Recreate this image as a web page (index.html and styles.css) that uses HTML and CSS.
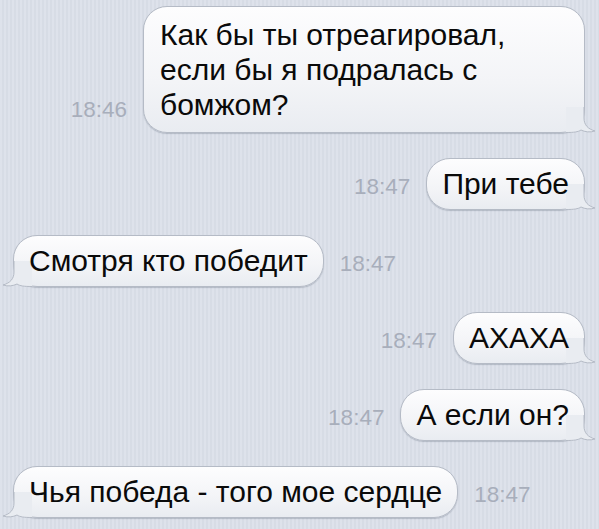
FILE: index.html
```html
<!DOCTYPE html>
<html lang="ru">
<head>
<meta charset="utf-8">
<title>Сообщения</title>
<link rel="stylesheet" href="styles.css">
</head>
<body>
<main class="chat">
  <div class="row out">
    <span class="time">18:46</span>
    <div class="bubble multi"><span class="text">Как бы ты отреагировал,<br>если бы я подралась с<br>бомжом?</span>
      <svg class="tail" viewBox="0 0 30 26" width="30" height="26"><path class="tail-fill" d="M0,0 H18 V11 C18,18 22,22 29,24 C24,25.6 19,25 15,23 C12,25 8,25.5 0,25.5 Z"/><path class="tail-line" d="M18,0 V11 C18,18 22,22 29,24 C24,25.6 19,25 15,23 C12,25 8,25.5 0,25.5"/></svg>
    </div>
  </div>
  <div class="row out">
    <span class="time">18:47</span>
    <div class="bubble"><span class="text">При тебе</span>
      <svg class="tail" viewBox="0 0 30 26" width="30" height="26"><path class="tail-fill" d="M0,0 H18 V11 C18,18 22,22 29,24 C24,25.6 19,25 15,23 C12,25 8,25.5 0,25.5 Z"/><path class="tail-line" d="M18,0 V11 C18,18 22,22 29,24 C24,25.6 19,25 15,23 C12,25 8,25.5 0,25.5"/></svg>
    </div>
  </div>
  <div class="row in">
    <div class="bubble"><span class="text">Смотря кто победит</span>
      <svg class="tail" viewBox="0 0 30 26" width="30" height="26"><path class="tail-fill" d="M0,0 H18 V11 C18,18 22,22 29,24 C24,25.6 19,25 15,23 C12,25 8,25.5 0,25.5 Z"/><path class="tail-line" d="M18,0 V11 C18,18 22,22 29,24 C24,25.6 19,25 15,23 C12,25 8,25.5 0,25.5"/></svg>
    </div>
    <span class="time">18:47</span>
  </div>
  <div class="row out">
    <span class="time">18:47</span>
    <div class="bubble"><span class="text">АХАХА</span>
      <svg class="tail" viewBox="0 0 30 26" width="30" height="26"><path class="tail-fill" d="M0,0 H18 V11 C18,18 22,22 29,24 C24,25.6 19,25 15,23 C12,25 8,25.5 0,25.5 Z"/><path class="tail-line" d="M18,0 V11 C18,18 22,22 29,24 C24,25.6 19,25 15,23 C12,25 8,25.5 0,25.5"/></svg>
    </div>
  </div>
  <div class="row out">
    <span class="time">18:47</span>
    <div class="bubble"><span class="text">А если он?</span>
      <svg class="tail" viewBox="0 0 30 26" width="30" height="26"><path class="tail-fill" d="M0,0 H18 V11 C18,18 22,22 29,24 C24,25.6 19,25 15,23 C12,25 8,25.5 0,25.5 Z"/><path class="tail-line" d="M18,0 V11 C18,18 22,22 29,24 C24,25.6 19,25 15,23 C12,25 8,25.5 0,25.5"/></svg>
    </div>
  </div>
  <div class="row in">
    <div class="bubble"><span class="text">Чья победа - того мое сердце</span>
      <svg class="tail" viewBox="0 0 30 26" width="30" height="26"><path class="tail-fill" d="M0,0 H18 V11 C18,18 22,22 29,24 C24,25.6 19,25 15,23 C12,25 8,25.5 0,25.5 Z"/><path class="tail-line" d="M18,0 V11 C18,18 22,22 29,24 C24,25.6 19,25 15,23 C12,25 8,25.5 0,25.5"/></svg>
    </div>
    <span class="time">18:47</span>
  </div>
</main>
</body>
</html>
```
FILE: styles.css
```css
html, body {
  margin: 0;
  padding: 0;
}
body {
  width: 599px;
  height: 529px;
  overflow: hidden;
  background-color: #dadfe9;
  background-image: repeating-linear-gradient(90deg, rgba(255,255,255,0.10) 0 2px, rgba(0,0,0,0.015) 2px 4px);
  font-family: "Liberation Sans", Arial, sans-serif;
}
.chat {
  display: flex;
  flex-direction: column;
  gap: 25px;
  padding: 6px 14px 0 13px;
}
.row {
  display: flex;
  align-items: flex-end;
  gap: 16px;
}
.row.out {
  justify-content: flex-end;
}
.row.in {
  justify-content: flex-start;
}
.time {
  font-size: 22.5px;
  line-height: 26px;
  color: #a8aebb;
  margin-bottom: 10px;
  white-space: nowrap;
}
.bubble {
  position: relative;
  box-sizing: border-box;
  font-size: 30px;
  line-height: 35px;
  color: #0a0a0a;
  padding: 7px 15px 8px;
  border-radius: 24px;
  background: linear-gradient(180deg, #fdfdfe 0%, #f3f4f7 60%, #e9ecf1 100%);
  border: 1px solid #b5bbc6;
  box-shadow: 0 1px 1px rgba(60,70,90,0.25);
  white-space: nowrap;
}
.bubble.multi {
  width: 442px;
  padding: 10px 15px 10px 16px;
}
.text {
  position: relative;
  z-index: 1;
}
.tail {
  position: absolute;
  bottom: -1px;
  right: -12px;
  width: 30px;
  height: 26px;
  overflow: visible;
}
.row.in .tail {
  right: auto;
  left: -12px;
  transform: scaleX(-1);
}
.tail-fill {
  fill: #e9ecf1;
}
.tail-line {
  fill: none;
  stroke: #b5bbc6;
  stroke-width: 1;
}
```
